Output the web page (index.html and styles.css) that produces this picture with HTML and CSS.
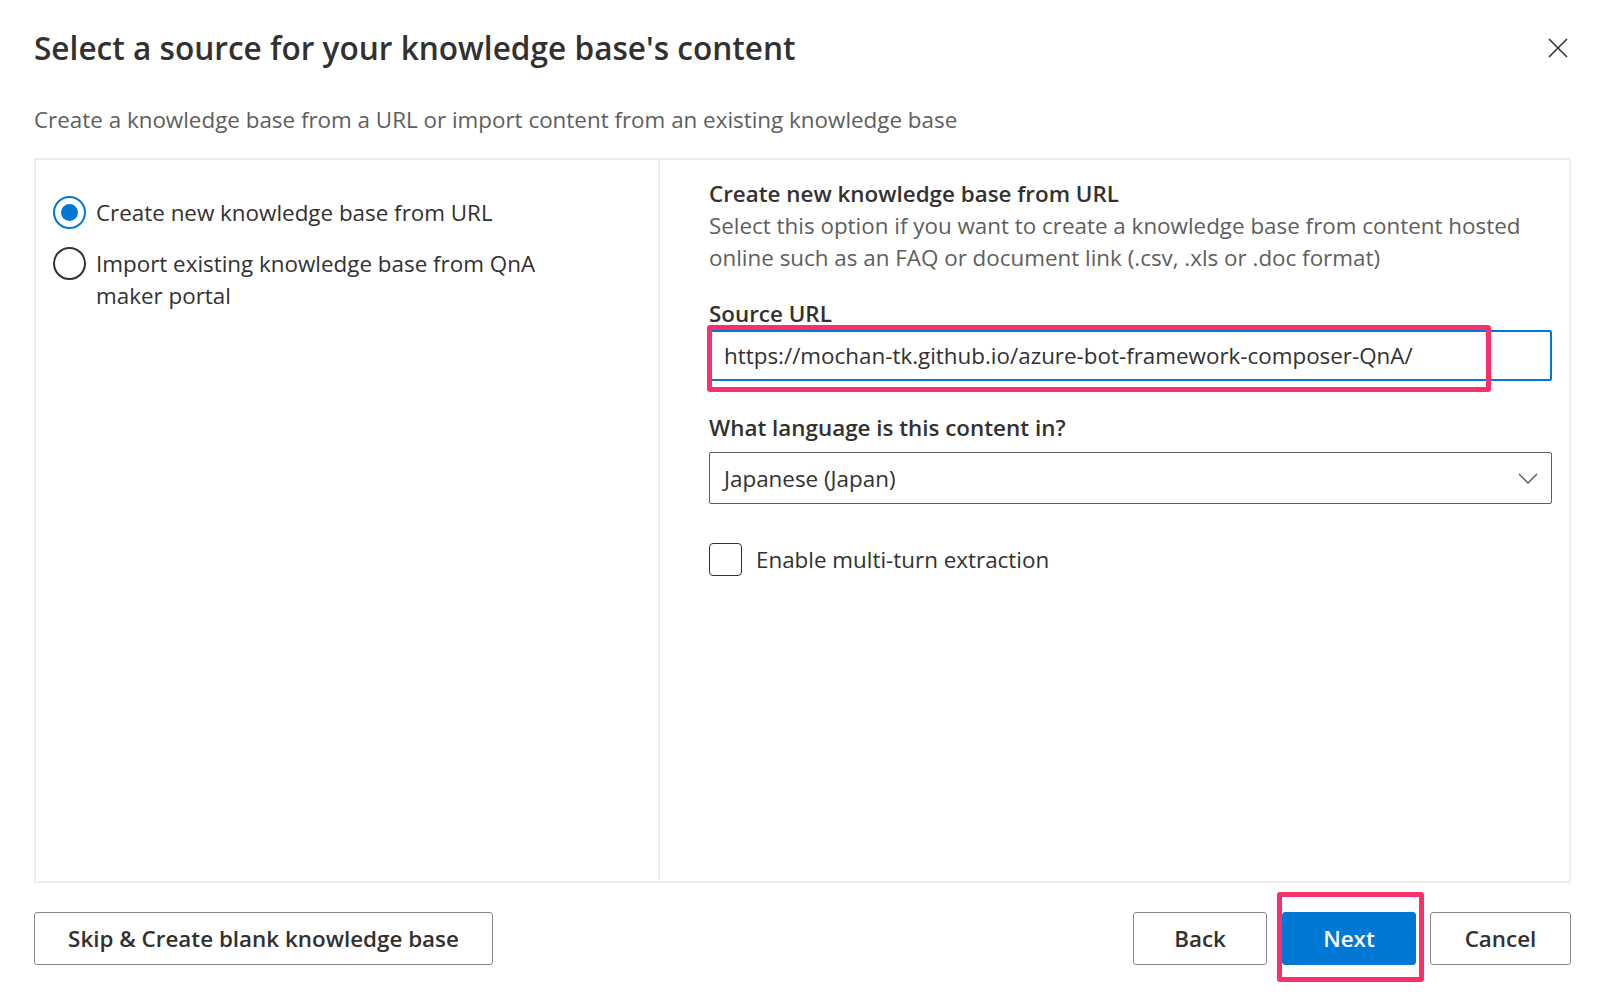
FILE: index.html
```html
<!DOCTYPE html>
<html lang="en">
<head>
<meta charset="utf-8">
<title>Select a source for your knowledge base's content</title>
<link rel="stylesheet" href="styles.css">
</head>
<body>
<div class="dialog">
  <div class="header">
    <h1 class="title">Select a source for your knowledge base's content</h1>
    <button class="close" aria-label="Close">
      <svg width="20" height="20" viewBox="0 0 20 20"><path d="M1 1 L19 19 M19 1 L1 19" stroke="#323130" stroke-width="1.6" fill="none"/></svg>
    </button>
  </div>
  <p class="subtitle">Create a knowledge base from a URL or import content from an existing knowledge base</p>

  <div class="panel">
    <div class="choices">
      <label class="option">
        <span class="radio checked"><span class="dot"></span></span>
        <span class="option-text">Create new knowledge base from URL</span>
      </label>
      <label class="option">
        <span class="radio"></span>
        <span class="option-text">Import existing knowledge base from QnA maker portal</span>
      </label>
    </div>
    <div class="details">
      <div class="heading">Create new knowledge base from URL</div>
      <div class="desc">Select this option if you want to create a knowledge base from content hosted online such as an FAQ or document link (.csv, .xls or .doc format)</div>

      <div class="field-label url-label">Source URL</div>
      <div class="field-wrap">
        <div class="textfield">https://mochan-tk.github.io/azure-bot-framework-composer-QnA/</div>
        <div class="highlight hl-url"></div>
      </div>

      <div class="field-label lang-label">What language is this content in?</div>
      <div class="dropdown">
        <span>Japanese (Japan)</span>
        <svg class="chevron" width="20" height="11" viewBox="0 0 20 11"><path d="M1 1 L10 10 L19 1" stroke="#605e5c" stroke-width="1.5" fill="none"/></svg>
      </div>

      <label class="check">
        <span class="box"></span>
        <span>Enable multi-turn extraction</span>
      </label>
    </div>
  </div>

  <div class="footer">
    <button class="btn skip">Skip &amp; Create blank knowledge base</button>
    <div class="actions">
      <button class="btn back">Back</button>
      <div class="next-wrap">
        <button class="btn primary next">Next</button>
        <div class="highlight hl-next"></div>
      </div>
      <button class="btn cancel">Cancel</button>
    </div>
  </div>
</div>
</body>
</html>
```

FILE: styles.css
```css
* { box-sizing: border-box; }

html, body {
  margin: 0;
  background: #ffffff;
}

body {
  min-height: 1001px;
  font-family: "Open Sans", "Noto Sans", "Liberation Sans", sans-serif;
  font-size: 22.4px;
  line-height: 32px;
  color: #323130;
}

.dialog {
  width: 1600px;
  min-height: 1001px;
  padding: 26px 29px 0 34px;
}

.header {
  display: flex;
  justify-content: space-between;
  align-items: center;
  height: 44px;
}

.title {
  margin: 0;
  font-size: 31.6px;
  line-height: 44px;
  font-weight: 600;
  color: #323130;
}

.close {
  width: 20px;
  height: 20px;
  padding: 0;
  margin-right: 3px;
  border: none;
  background: transparent;
  display: flex;
}

.subtitle {
  margin: 34px 0 0;
  color: #605e5c;
}

.panel {
  margin-top: 22px;
  height: 725px;
  border: 2px solid #efeeed;
  display: grid;
  grid-template-columns: 622px 1fr;
}

.choices {
  padding: 37px 0 0 17px;
  display: flex;
  flex-direction: column;
  gap: 19px;
}

.option {
  display: flex;
  align-items: flex-start;
  gap: 10px;
}

.radio {
  flex: none;
  width: 33px;
  height: 33px;
  margin-top: -1px;
  border-radius: 50%;
  border: 2px solid #323130;
  display: flex;
  align-items: center;
  justify-content: center;
}

.radio.checked {
  border-color: #0078d4;
}

.radio .dot {
  width: 17px;
  height: 17px;
  border-radius: 50%;
  background: #0078d4;
}

.option-text {
  max-width: 480px;
}

.details {
  border-left: 2px solid #efeeed;
  padding: 18px 17px 0 49px;
}

.heading {
  font-weight: 600;
}

.desc {
  color: #605e5c;
}

.field-label {
  font-weight: 600;
}

.url-label {
  margin-top: 24px;
}

.field-wrap {
  position: relative;
}

.textfield {
  height: 51px;
  border: 2px solid #0078d4;
  border-radius: 2px;
  padding: 1px 13px 0;
  display: flex;
  align-items: center;
}

.highlight {
  position: absolute;
  border: 5px solid #f8306c;
  border-radius: 3px;
  pointer-events: none;
}

.hl-url {
  left: -2px;
  top: -5px;
  width: 784px;
  height: 67px;
}

.lang-label {
  margin-top: 31px;
}

.dropdown {
  margin-top: 8px;
  height: 52px;
  border: 1px solid #605e5c;
  border-radius: 2px;
  padding: 1px 13px 0 14px;
  display: flex;
  align-items: center;
  justify-content: space-between;
}

.check {
  margin-top: 39px;
  display: flex;
  align-items: center;
  gap: 14px;
}

.check .box {
  width: 33px;
  height: 33px;
  border: 1px solid #323130;
  border-radius: 4px;
}

.footer {
  margin-top: 29px;
  display: flex;
  justify-content: space-between;
  align-items: flex-start;
}

.actions {
  display: flex;
  gap: 15px;
}

.btn {
  font-family: inherit;
  font-size: 22.4px;
  font-weight: 600;
  color: #323130;
  background: #ffffff;
  border: 1px solid #8a8886;
  border-radius: 3px;
  height: 53px;
  padding: 0;
  white-space: nowrap;
  text-align: center;
  cursor: pointer;
}

.skip {
  width: 459px;
}

.back {
  width: 134px;
}

.next-wrap {
  position: relative;
  height: 53px;
}

.next {
  width: 134px;
}

.cancel {
  width: 141px;
  margin-left: -1px;
}

.primary {
  background: #0078d4;
  border-color: #0078d4;
  color: #ffffff;
}

.hl-next {
  left: -5px;
  top: -20px;
  right: -8px;
  bottom: -17px;
}
```
